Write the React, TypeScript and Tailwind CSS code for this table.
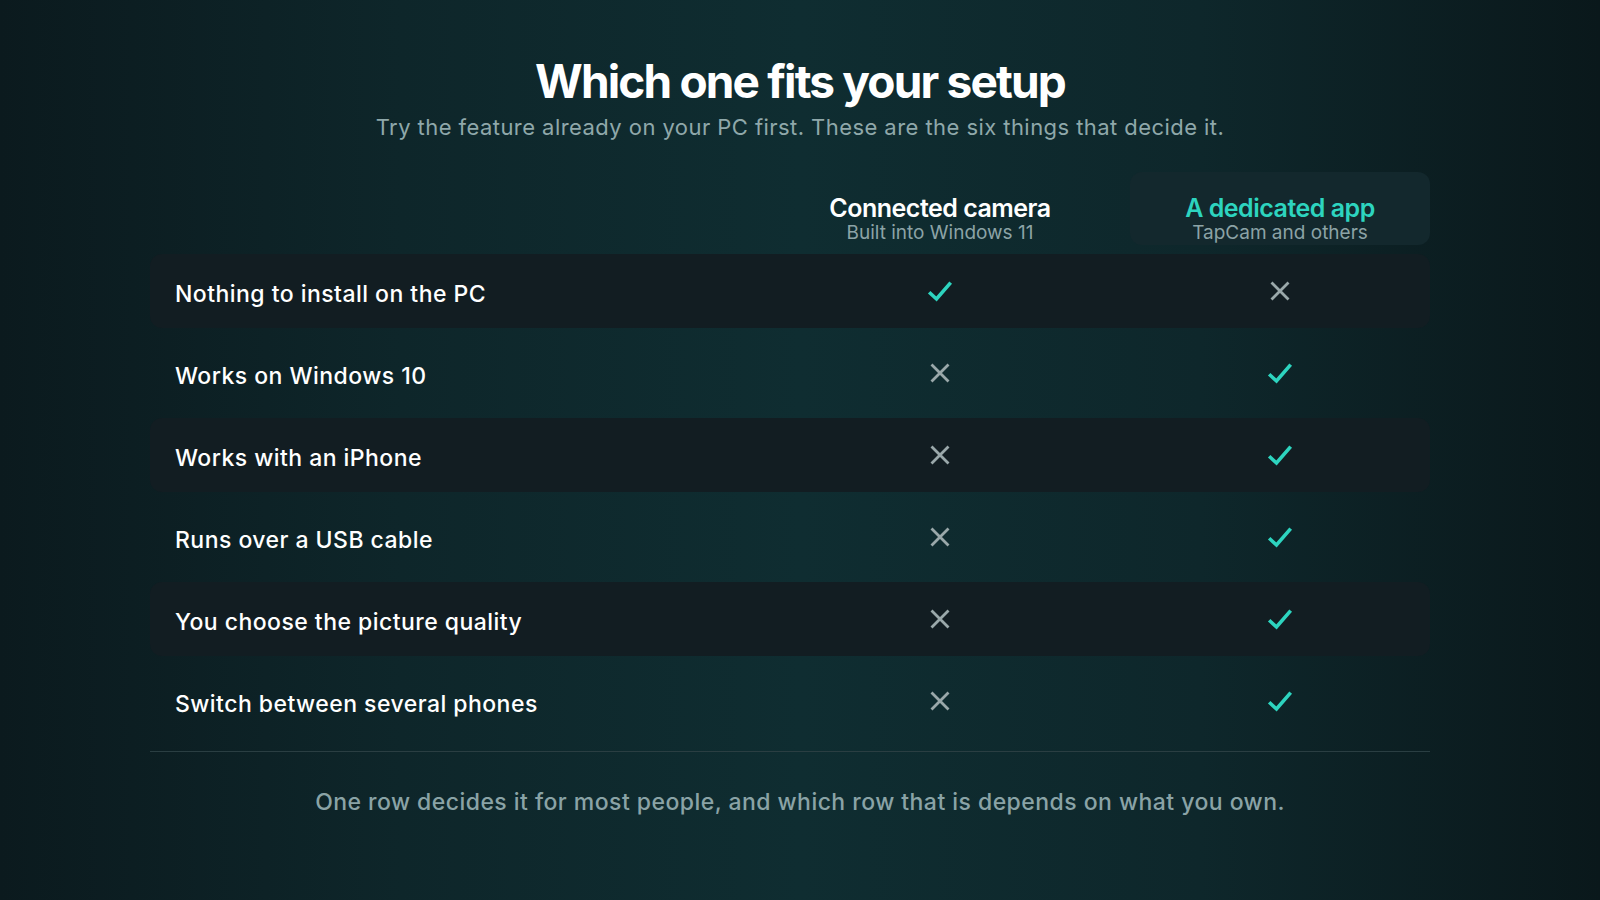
import React from "react";

const rows: { label: string; a: boolean; b: boolean }[] = [
  { label: "Nothing to install on the PC", a: true, b: false },
  { label: "Works on Windows 10", a: false, b: true },
  { label: "Works with an iPhone", a: false, b: true },
  { label: "Runs over a USB cable", a: false, b: true },
  { label: "You choose the picture quality", a: false, b: true },
  { label: "Switch between several phones", a: false, b: true },
];

function Check() {
  return (
    <svg width="28" height="28" viewBox="0 0 28 28" fill="none">
      <path d="M4.5 16.5 L10.5 22 L23.5 7" stroke="#2dd4bf" strokeWidth="3.6" strokeLinecap="square" strokeLinejoin="miter" />
    </svg>
  );
}

function Cross() {
  return (
    <svg width="24" height="24" viewBox="0 0 24 24" fill="none">
      <path d="M3.5 3.5 L20.5 20.5 M20.5 3.5 L3.5 20.5" stroke="#9aa8aa" strokeWidth="2.8" strokeLinecap="butt" />
    </svg>
  );
}

function Mark({ ok }: { ok: boolean }) {
  return <div className="flex items-center justify-center">{ok ? <Check /> : <Cross />}</div>;
}

export default function App() {
  return (
    <div
      className="w-full h-[900px] overflow-hidden bg-[linear-gradient(to_right,#0b1a1e_0%,#0e262a_25%,#0f2d31_50%,#0e272b_75%,#0a181b_100%)]"
      style={{ fontFamily: "Inter, 'Noto Sans', sans-serif" }}
    >
      <div className="flex flex-col items-center pt-[52px]">
        <h1 className="text-[46px] leading-[58px] font-bold tracking-[-0.04em] text-white">
          Which one fits your setup
        </h1>
        <p className="mt-[3px] text-[22px] leading-[28px] text-[#8fa8aa] tracking-[0.02em]">
          Try the feature already on your PC first. These are the six things that decide it.
        </p>
      </div>

      <div className="w-[1300px] mx-auto pr-[20px] mt-[31px]">
        <div className="grid grid-cols-[600px_300px_300px] gap-x-[40px]">
          <div />
          <div className="h-[73px] flex flex-col items-center justify-end pb-[1px]">
            <div className="text-[25px] leading-[28px] font-semibold tracking-[-0.02em] text-white">Connected camera</div>
            <div className="text-[19px] leading-[22px] text-[#8ca3a6]">Built into Windows 11</div>
          </div>
          <div className="h-[73px] flex flex-col items-center justify-end pb-[1px] rounded-[12px] bg-[#13282d]">
            <div className="text-[25px] leading-[28px] font-semibold tracking-[-0.02em] text-[#2dd4bf]">A dedicated app</div>
            <div className="text-[19px] leading-[22px] text-[#8ca3a6]">TapCam and others</div>
          </div>
        </div>

        <div className="mt-[9px] flex flex-col gap-[8px]">
          {rows.map((r, i) => (
            <div
              key={r.label}
              className={`grid grid-cols-[600px_300px_300px] gap-x-[40px] h-[74px] items-center rounded-[12px] ${
                i % 2 === 0 ? "bg-[#121d22]" : ""
              }`}
            >
              <div className="pl-[25px] pt-[6px] text-[23px] font-medium text-white tracking-[0.02em]">{r.label}</div>
              <Mark ok={r.a} />
              <Mark ok={r.b} />
            </div>
          ))}
        </div>

        <div className="mt-[13px] h-px bg-[#2a3e42]" />
      </div>

      <p className="mt-[36px] text-center text-[23px] leading-[28px] font-medium text-[#8aa3a6] tracking-[0.02em]">
        One row decides it for most people, and which row that is depends on what you own.
      </p>
    </div>
  );
}
